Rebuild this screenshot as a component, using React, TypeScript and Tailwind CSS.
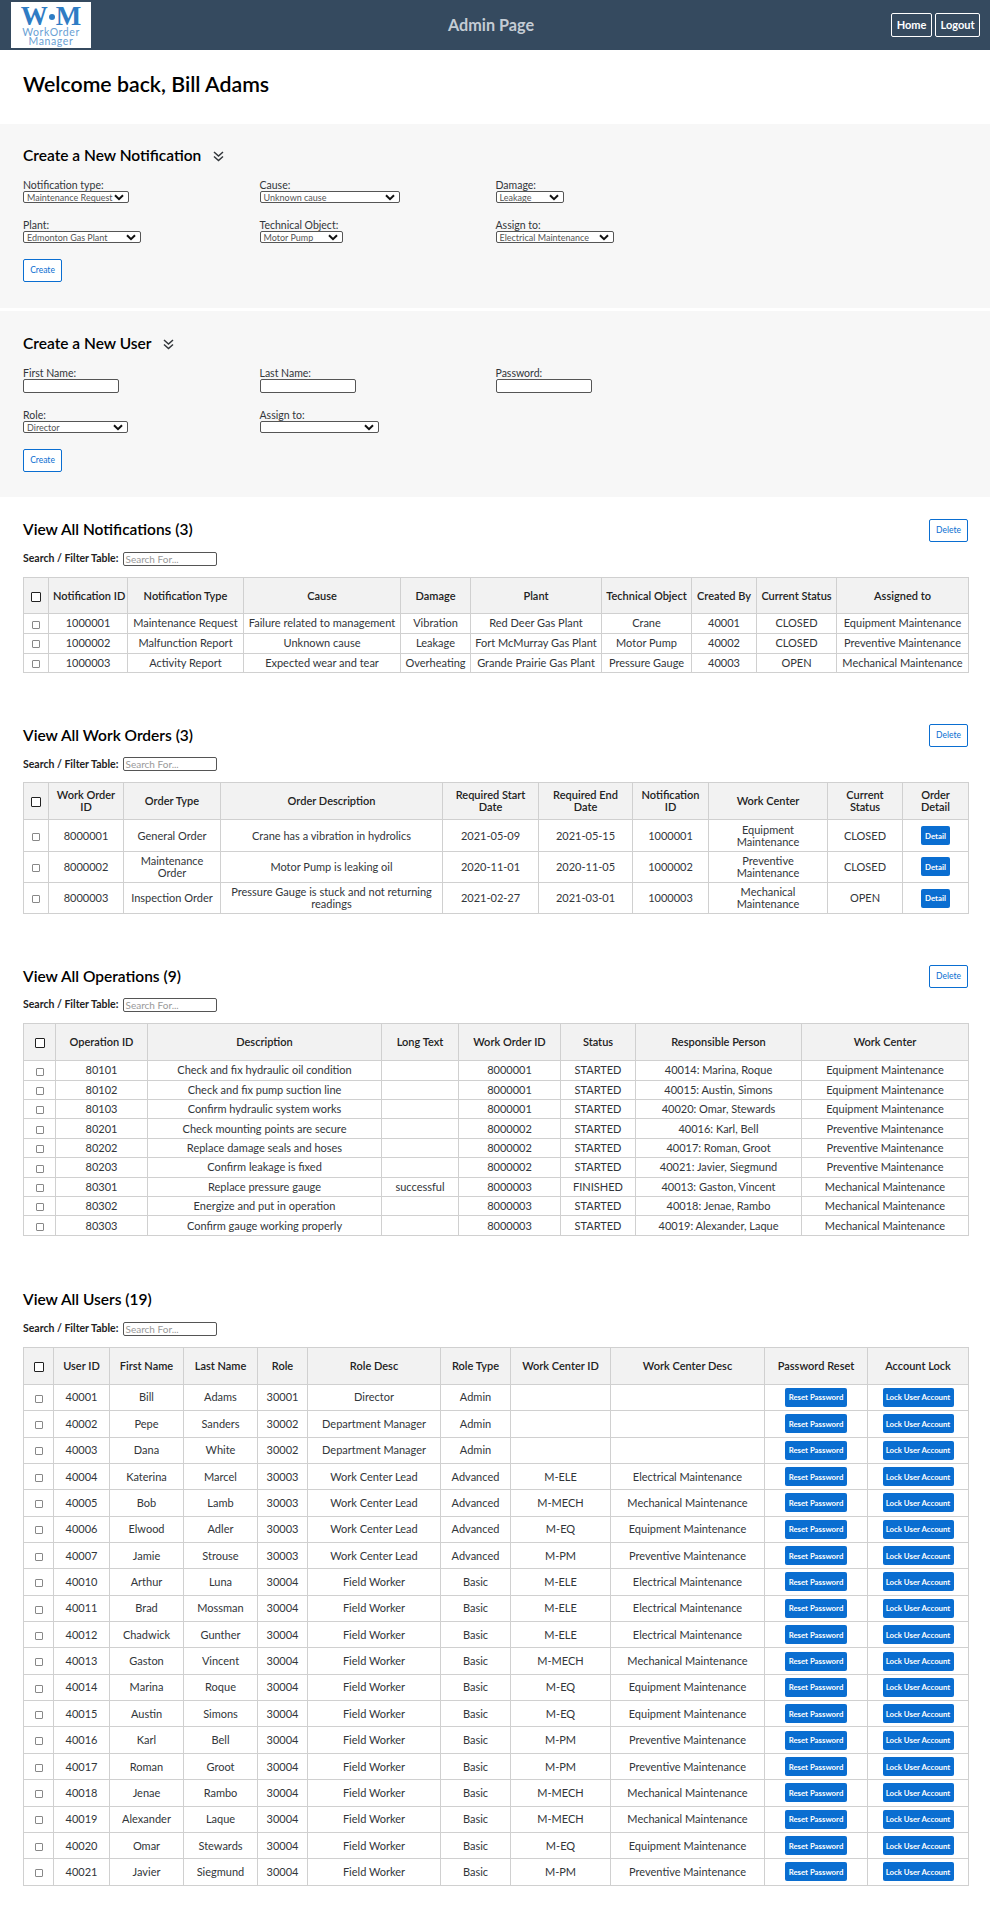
const font = "[font-family:'Lato','Liberation_Sans',sans-serif]";

type Col = { title: string; w: number };

const ColGroup = ({ cols }: { cols: Col[] }) => (
  <colgroup>
    {cols.map((c, i) => (
      <col key={i} style={{ width: c.w }} />
    ))}
  </colgroup>
);

const Chevron = () => (
  <svg width="11" height="11" viewBox="0 0 11 11" fill="none" stroke="#32363a" strokeWidth="1.5" className="ml-[12px]">
    <path d="M1 1 5.5 5 10 1" />
    <path d="M1 5.5 5.5 9.5 10 5.5" />
  </svg>
);

const Logo = () => (
  <div className="w-[80px] h-[46px] bg-white flex flex-col items-center overflow-hidden text-[#2f7cc4]">
    <div className="flex items-center font-bold text-[27px] leading-[21px] h-[21px] mt-[4px] font-['Liberation_Serif',serif]">
      <span>W</span>
      <span className="w-[6px] h-[6px] rounded-full bg-[#2f7cc4] mx-[1px]" />
      <span>M</span>
    </div>
    <div className="text-[10.5px] leading-[9px] tracking-[0.6px] text-[#6a9fd4] mt-[1px]">WorkOrder</div>
    <div className="text-[10.5px] leading-[9px] tracking-[0.6px] text-[#6a9fd4]">Manager</div>
  </div>
);

const Sel = ({ w, value }: { w: number; value: string }) => (
  <div
    className="h-[12px] border border-[#555] rounded-[2px] bg-white flex items-center justify-between pl-[3px] pr-[4px] text-[9px] text-[#555] leading-none whitespace-nowrap"
    style={{ width: w }}
  >
    <span>{value}</span>
    <svg width="10" height="7" viewBox="0 0 10 7" fill="none" stroke="#111" strokeWidth="2" className="shrink-0">
      <path d="M1 1.2 5 5.2 9 1.2" />
    </svg>
  </div>
);

const Field = ({ label, children }: { label: string; children: React.ReactNode }) => (
  <div>
    <div className="text-[10.5px] leading-[12px] text-[#32363a]">{label}</div>
    {children}
  </div>
);

const Outline = ({ label, w = 39 }: { label: string; w?: number }) => (
  <button
    className="block h-[23px] border border-[#0a6ed1] rounded-[2px] text-[#0a6ed1] text-[8.5px] bg-white"
    style={{ width: w }}
  >
    {label}
  </button>
);

const Text = ({ w }: { w: number }) => (
  <div className="h-[14px] border border-[#555] rounded-[2px] bg-white" style={{ width: w }} />
);

const Blue = ({ label, w }: { label: string; w: number }) => (
  <button
    className="h-[19px] rounded-[2px] bg-[#0a6ed1] text-white text-[7.8px] font-bold align-middle whitespace-nowrap"
    style={{ width: w }}
  >
    {label}
  </button>
);

const Check = ({ big }: { big?: boolean }) => (
  <span
    className={
      big
        ? "inline-block align-middle w-[10px] h-[10px] border border-[#222] rounded-[1px] bg-white"
        : "inline-block align-middle w-[8px] h-[8px] border border-[#888] rounded-[1px] bg-white"
    }
  />
);

const DataTable = ({
  cols,
  rows,
  headH,
  rowH,
}: {
  cols: Col[];
  rows: React.ReactNode[][];
  headH: number;
  rowH: number;
}) => (
  <table className="table-fixed border-collapse w-[945px] text-[11px] leading-[12px] text-[#32363a]">
    <ColGroup cols={cols} />
    <thead>
      <tr style={{ height: headH }} className="bg-[#f2f2f2]">
        {cols.map((c, i) => (
          <th key={i} className="border border-[#d0d0d0] font-semibold text-center px-[4px] py-0 text-[#222]">
            {i === 0 ? <Check big /> : c.title}
          </th>
        ))}
      </tr>
    </thead>
    <tbody>
      {rows.map((r, ri) => (
        <tr key={ri} style={{ height: rowH }}>
          <td className="border border-[#d0d0d0] text-center p-0">
            <Check />
          </td>
          {r.map((v, i) => (
            <td key={i} className="border border-[#d0d0d0] text-center px-[4px] py-0">
              {v}
            </td>
          ))}
        </tr>
      ))}
    </tbody>
  </table>
);

const TableHead = ({ title, del = true, pt }: { title: string; del?: boolean; pt: string }) => (
  <div className={pt}>
    <div className="flex items-center justify-between h-[22px]">
      <h2 className="text-[15.5px] font-semibold text-black leading-none">{title}</h2>
      {del && <Outline label="Delete" />}
    </div>
    <div className="flex items-center mt-[11px] h-[14px] mb-[11px]">
      <span className="text-[10.5px] font-bold text-[#222] w-[99.5px] whitespace-nowrap">Search / Filter Table:</span>
      <div className="w-[94px] h-[14px] border border-[#555] rounded-[2px] text-[10px] text-[#999] pl-[2px] leading-[12px]">
        Search For...
      </div>
    </div>
  </div>
);

const notifCols: Col[] = [
  { title: "", w: 25 },
  { title: "Notification\u00A0ID", w: 79 },
  { title: "Notification Type", w: 116 },
  { title: "Cause", w: 157 },
  { title: "Damage", w: 70 },
  { title: "Plant", w: 131 },
  { title: "Technical Object", w: 90 },
  { title: "Created By", w: 65 },
  { title: "Current Status", w: 80 },
  { title: "Assigned to", w: 132 },
];
const notifRows = [
  ["1000001", "Maintenance Request", "Failure related to management", "Vibration", "Red Deer Gas Plant", "Crane", "40001", "CLOSED", "Equipment Maintenance"],
  ["1000002", "Malfunction Report", "Unknown cause", "Leakage", "Fort McMurray Gas Plant", "Motor Pump", "40002", "CLOSED", "Preventive Maintenance"],
  ["1000003", "Activity Report", "Expected wear and tear", "Overheating", "Grande Prairie Gas Plant", "Pressure Gauge", "40003", "OPEN", "Mechanical Maintenance"],
];

const orderCols: Col[] = [
  { title: "", w: 25 },
  { title: "Work Order ID", w: 75 },
  { title: "Order Type", w: 97 },
  { title: "Order Description", w: 222 },
  { title: "Required Start Date", w: 96 },
  { title: "Required End Date", w: 94 },
  { title: "Notification ID", w: 76 },
  { title: "Work Center", w: 119 },
  { title: "Current Status", w: 75 },
  { title: "Order Detail", w: 66 },
];
const detail = <Blue label="Detail" w={29} />;
const orderRows = [
  ["8000001", "General Order", "Crane has a vibration in hydrolics", "2021-05-09", "2021-05-15", "1000001", "Equipment Maintenance", "CLOSED", detail],
  ["8000002", "Maintenance Order", "Motor Pump is leaking oil", "2020-11-01", "2020-11-05", "1000002", "Preventive Maintenance", "CLOSED", detail],
  ["8000003", "Inspection Order", "Pressure Gauge is stuck and not returning readings", "2021-02-27", "2021-03-01", "1000003", "Mechanical Maintenance", "OPEN", detail],
];

const opCols: Col[] = [
  { title: "", w: 32 },
  { title: "Operation ID", w: 92 },
  { title: "Description", w: 234 },
  { title: "Long Text", w: 77 },
  { title: "Work Order ID", w: 102 },
  { title: "Status", w: 75 },
  { title: "Responsible Person", w: 166 },
  { title: "Work Center", w: 167 },
];
const E = "Equipment Maintenance";
const P = "Preventive Maintenance";
const M = "Mechanical Maintenance";
const L = "Electrical Maintenance";
const opRows = [
  ["80101", "Check and fix hydraulic oil condition", "", "8000001", "STARTED", "40014: Marina, Roque", E],
  ["80102", "Check and fix pump suction line", "", "8000001", "STARTED", "40015: Austin, Simons", E],
  ["80103", "Confirm hydraulic system works", "", "8000001", "STARTED", "40020: Omar, Stewards", E],
  ["80201", "Check mounting points are secure", "", "8000002", "STARTED", "40016: Karl, Bell", P],
  ["80202", "Replace damage seals and hoses", "", "8000002", "STARTED", "40017: Roman, Groot", P],
  ["80203", "Confirm leakage is fixed", "", "8000002", "STARTED", "40021: Javier, Siegmund", P],
  ["80301", "Replace pressure gauge", "successful", "8000003", "FINISHED", "40013: Gaston, Vincent", M],
  ["80302", "Energize and put in operation", "", "8000003", "STARTED", "40018: Jenae, Rambo", M],
  ["80303", "Confirm gauge working properly", "", "8000003", "STARTED", "40019: Alexander, Laque", M],
];

const userCols: Col[] = [
  { title: "", w: 30 },
  { title: "User ID", w: 56 },
  { title: "First Name", w: 74 },
  { title: "Last Name", w: 74 },
  { title: "Role", w: 50 },
  { title: "Role Desc", w: 133 },
  { title: "Role Type", w: 70 },
  { title: "Work Center ID", w: 100 },
  { title: "Work Center Desc", w: 154 },
  { title: "Password Reset", w: 103 },
  { title: "Account Lock", w: 101 },
];
const users: string[][] = [
  ["40001", "Bill", "Adams", "30001", "Director", "Admin", "", ""],
  ["40002", "Pepe", "Sanders", "30002", "Department Manager", "Admin", "", ""],
  ["40003", "Dana", "White", "30002", "Department Manager", "Admin", "", ""],
  ["40004", "Katerina", "Marcel", "30003", "Work Center Lead", "Advanced", "M-ELE", L],
  ["40005", "Bob", "Lamb", "30003", "Work Center Lead", "Advanced", "M-MECH", M],
  ["40006", "Elwood", "Adler", "30003", "Work Center Lead", "Advanced", "M-EQ", E],
  ["40007", "Jamie", "Strouse", "30003", "Work Center Lead", "Advanced", "M-PM", P],
  ["40010", "Arthur", "Luna", "30004", "Field Worker", "Basic", "M-ELE", L],
  ["40011", "Brad", "Mossman", "30004", "Field Worker", "Basic", "M-ELE", L],
  ["40012", "Chadwick", "Gunther", "30004", "Field Worker", "Basic", "M-ELE", L],
  ["40013", "Gaston", "Vincent", "30004", "Field Worker", "Basic", "M-MECH", M],
  ["40014", "Marina", "Roque", "30004", "Field Worker", "Basic", "M-EQ", E],
  ["40015", "Austin", "Simons", "30004", "Field Worker", "Basic", "M-EQ", E],
  ["40016", "Karl", "Bell", "30004", "Field Worker", "Basic", "M-PM", P],
  ["40017", "Roman", "Groot", "30004", "Field Worker", "Basic", "M-PM", P],
  ["40018", "Jenae", "Rambo", "30004", "Field Worker", "Basic", "M-MECH", M],
  ["40019", "Alexander", "Laque", "30004", "Field Worker", "Basic", "M-MECH", M],
  ["40020", "Omar", "Stewards", "30004", "Field Worker", "Basic", "M-EQ", E],
  ["40021", "Javier", "Siegmund", "30004", "Field Worker", "Basic", "M-PM", P],
];
const userRows = users.map((u) => [
  ...u,
  <Blue label="Reset Password" w={62} />,
  <Blue label="Lock User Account" w={71} />,
]);

export default function App() {
  return (
    <div className={`${font} bg-white min-h-[1917px] overflow-hidden`}>
      <header className="relative h-[50px] bg-[#354a5f] flex items-center justify-between pl-[11px] pr-[10px]">
        <Logo />
        <div className="absolute left-[448px] text-[16.2px] font-bold text-[#c4ccd4]">Admin Page</div>
        <div className="flex gap-[3px]">
          <button className="w-[41px] h-[24px] border border-white rounded-[2px] text-white text-[11px] font-bold">Home</button>
          <button className="w-[45px] h-[24px] border border-white rounded-[2px] text-white text-[11px] font-bold">Logout</button>
        </div>
      </header>

      <div className="h-[74px] pl-[23px] pb-[4px] flex items-center">
        <h1 className="text-[21.3px] font-semibold text-black">Welcome back, Bill Adams</h1>
      </div>

      <section className="h-[184px] bg-[#f7f7f7] pl-[23px] pt-[22px]">
        <div className="flex items-center h-[20px]">
          <h2 className="text-[15.5px] font-semibold text-black">Create a New Notification</h2>
          <Chevron />
        </div>
        <div className="grid grid-cols-[236.5px_236px_1fr] gap-y-[16px] mt-[13px]">
          <Field label="Notification type:"><Sel w={106} value="Maintenance Request" /></Field>
          <Field label="Cause:"><Sel w={140} value="Unknown cause" /></Field>
          <Field label="Damage:"><Sel w={68} value="Leakage" /></Field>
          <Field label="Plant:"><Sel w={118} value="Edmonton Gas Plant" /></Field>
          <Field label="Technical Object:"><Sel w={83} value="Motor Pump" /></Field>
          <Field label="Assign to:"><Sel w={118} value="Electrical Maintenance" /></Field>
        </div>
        <div className="mt-[16px]"><Outline label="Create" /></div>
      </section>

      <section className="mt-[3px] h-[186px] bg-[#f7f7f7] pl-[23px] pt-[23px]">
        <div className="flex items-center h-[20px]">
          <h2 className="text-[15.5px] font-semibold text-black">Create a New User</h2>
          <Chevron />
        </div>
        <div className="grid grid-cols-[236.5px_236px_1fr] gap-y-[16px] mt-[13px]">
          <Field label="First Name:"><Text w={96} /></Field>
          <Field label="Last Name:"><Text w={96} /></Field>
          <Field label="Password:"><Text w={96} /></Field>
          <Field label="Role:"><Sel w={105} value="Director" /></Field>
          <Field label="Assign to:"><Sel w={119} value="" /></Field>
        </div>
        <div className="mt-[16px]"><Outline label="Create" /></div>
      </section>

      <main className="pl-[23px] pr-[22px]">
        <TableHead title="View All Notifications (3)" pt="pt-[22px]" />
        <DataTable cols={notifCols} rows={notifRows} headH={36} rowH={19.8} />

        <TableHead title="View All Work Orders (3)" pt="pt-[51px]" />
        <DataTable cols={orderCols} rows={orderRows} headH={37} rowH={31.3} />

        <TableHead title="View All Operations (9)" pt="pt-[51px]" />
        <DataTable cols={opCols} rows={opRows} headH={37} rowH={19.4} />

        <TableHead title="View All Users (19)" del={false} pt="pt-[53px]" />
        <DataTable cols={userCols} rows={userRows} headH={37} rowH={26.37} />
      </main>
    </div>
  );
}
